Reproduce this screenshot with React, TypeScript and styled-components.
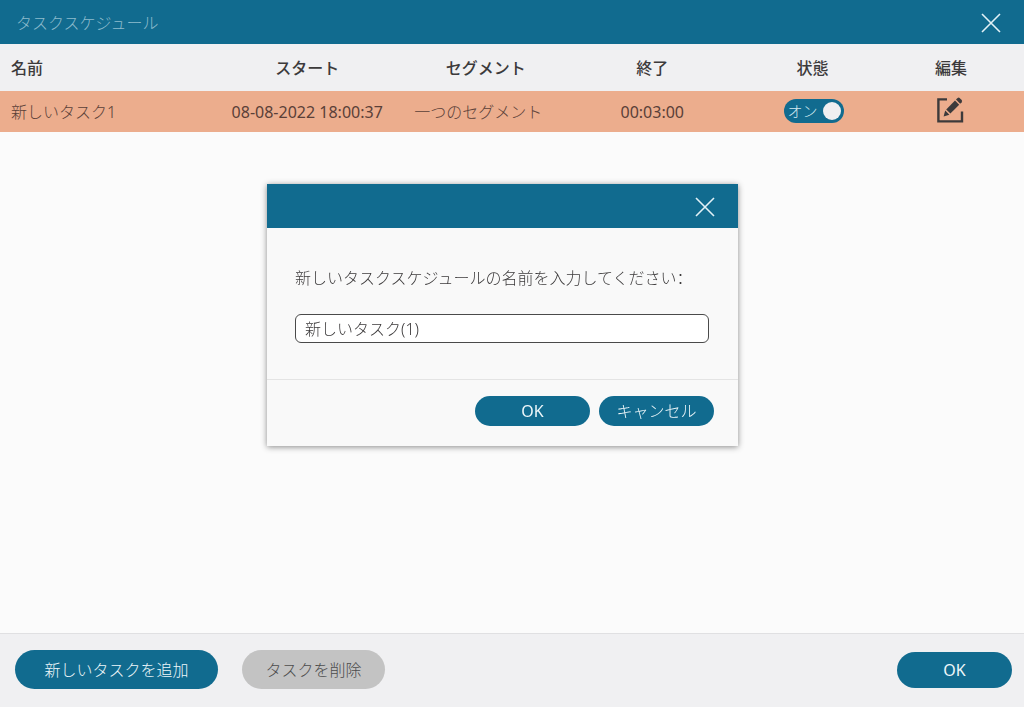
import { useState } from "react";
import styled, { createGlobalStyle } from "styled-components";

const color = {
  brand: "#116b8f",
  bar: "#f0f0f2",
  surface: "#fbfbfb",
  panel: "#f9f9f9",
  highlight: "#ecad8d",
  ink: "#3c3a3b",
  line: "#e0e0e2",
};

const GlobalStyle = createGlobalStyle`
  *, *::before, *::after { box-sizing: border-box; }
  body { margin: 0; }
  body, button, input {
    font-family: "Noto Sans", "Noto Sans CJK JP", sans-serif;
    font-size: 16px;
    line-height: 24px;
    color: ${color.ink};
  }
`;

const Window = styled.div`
  display: flex;
  flex-direction: column;
  min-height: 100vh;
  background: ${color.surface};
`;

const TitleBar = styled.header<{ $inset: number }>`
  display: flex;
  align-items: center;
  justify-content: space-between;
  height: 44px;
  padding: 2px ${(p) => p.$inset}px 0 16px;
  background: ${color.brand};
`;

const Title = styled.h1`
  margin: 0;
  font-size: 16px;
  font-weight: 300;
  color: #8dbccd;
`;

const CloseButton = styled.button`
  display: flex;
  margin-left: auto;
  padding: 0;
  border: 0;
  background: none;
  color: #e2f1f6;
  cursor: pointer;
`;

const Content = styled.main`
  flex: 1;
`;

const Table = styled.table`
  width: 100%;
  border-collapse: collapse;
  table-layout: fixed;
`;

const HeadRow = styled.tr`
  height: 47px;
  background: ${color.bar};
`;

const TaskRow = styled.tr`
  height: 41px;
  background: ${color.highlight};
  color: #5a4038;
`;

const HeadCell = styled.th<{ $width: string; $align?: string; $end?: number }>`
  width: ${(p) => p.$width};
  padding: 0 ${(p) => p.$end ?? 0}px 0 ${(p) => (p.$align === "left" ? 11 : 0)}px;
  text-align: ${(p) => p.$align ?? "center"};
  font-weight: 500;
`;

const Cell = styled.td<{ $align?: string; $start?: number; $end?: number; $light?: boolean }>`
  padding: 0 ${(p) => p.$end ?? 0}px 0 ${(p) => p.$start ?? 0}px;
  text-align: ${(p) => p.$align ?? "center"};
  font-weight: ${(p) => (p.$light ? 300 : 400)};
`;

const ControlCell = styled(Cell)`
  padding-bottom: 3px;
`;

const Toggle = styled.label`
  display: inline-flex;
  align-items: center;
  justify-content: space-between;
  width: 60px;
  height: 24px;
  padding: 0 3px 0 4px;
  border-radius: 12px;
  background: ${color.brand};
  color: #d5eaf1;
  font-size: 15px;
  font-weight: 300;
  line-height: 24px;
  vertical-align: middle;
  cursor: pointer;
`;

const ToggleKnob = styled.input`
  appearance: none;
  width: 18px;
  height: 18px;
  margin: 0;
  border-radius: 50%;
  background: #efeff1;
`;

const IconButton = styled.button`
  display: inline-flex;
  padding: 0;
  border: 0;
  background: none;
  color: ${color.ink};
  vertical-align: middle;
  cursor: pointer;
`;

const ActionBar = styled.footer`
  display: flex;
  align-items: center;
  gap: 24px;
  height: 74px;
  padding: 0 12px 2px 15px;
  border-top: 1px solid ${color.line};
  background: ${color.bar};
`;

const sizes = {
  small: { width: 115, height: 30 },
  medium: { width: 115, height: 36 },
  large: { width: 143, height: 39 },
  wide: { width: 203, height: 39 },
};

const PillButton = styled.button<{ $size: keyof typeof sizes; $push?: boolean; $light?: boolean }>`
  width: ${(p) => sizes[p.$size].width}px;
  height: ${(p) => sizes[p.$size].height}px;
  margin-left: ${(p) => (p.$push ? "auto" : 0)};
  padding: 0;
  border: 0;
  border-radius: 20px;
  background: ${color.brand};
  color: #eef7fa;
  font-weight: ${(p) => (p.$light ? 300 : 400)};
  cursor: pointer;

  &:disabled {
    background: #c3c3c3;
    color: #4c4c4c;
    cursor: default;
  }
`;

const Overlay = styled.div`
  position: fixed;
  inset: 0;
  display: flex;
  align-items: flex-start;
  justify-content: center;
  padding: 26vh 19px 0 0;
`;

const Dialog = styled.form`
  width: 471px;
  max-width: 100%;
  background: ${color.panel};
  box-shadow: 0 1px 6px rgba(0, 0, 0, 0.45);
`;

const DialogBody = styled.div`
  display: flex;
  flex-direction: column;
  gap: 24px;
  padding: 38px 29px 36px 28px;
`;

const Prompt = styled.label`
  font-family: "Noto Sans", "Noto Sans CJK SC", sans-serif;
  font-weight: 300;
`;

const TextInput = styled.input`
  width: 100%;
  height: 29px;
  padding: 0 9px;
  border: 1px solid #4a4a4a;
  border-radius: 6px;
  outline: 0;
  background: #fff;
  font-weight: 300;
`;

const DialogActions = styled.div`
  display: flex;
  justify-content: flex-end;
  gap: 9px;
  padding: 16px 24px 20px;
  border-top: 1px solid #e4e4e4;
`;

function CloseIcon() {
  return (
    <svg width="20" height="20" viewBox="0 0 20 20" fill="none" stroke="currentColor" strokeWidth="1.6" aria-hidden="true">
      <path d="M1 1 19 19M19 1 1 19" />
    </svg>
  );
}

function EditIcon() {
  return (
    <svg width="28" height="28" viewBox="0 0 28 28" aria-hidden="true">
      <path d="M11 3.4H2.4V25.4H26V15.5" fill="none" stroke="currentColor" strokeWidth="2.4" />
      <path d="M7.6 20.4 9.2 14.6 13.4 18.8Z" fill="currentColor" />
      <path d="M10.2 13.4 19 4.6 23.2 8.8 14.4 17.6Z" fill="currentColor" />
      <path d="M20 3.6 21.6 2Q22.6 1.2 23.6 2L25.7 4.1Q26.5 5.2 25.7 6.3L24.2 7.8Z" fill="currentColor" />
    </svg>
  );
}

export default function App() {
  const [enabled, setEnabled] = useState(true);
  const [dialogOpen, setDialogOpen] = useState(true);
  const [name, setName] = useState("新しいタスク(1)");
  const closeDialog = () => setDialogOpen(false);

  return (
    <Window lang="ja">
      <GlobalStyle />
      <TitleBar $inset={23}>
        <Title>タスクスケジュール</Title>
        <CloseButton type="button" aria-label="閉じる">
          <CloseIcon />
        </CloseButton>
      </TitleBar>

      <Content>
        <Table>
          <thead>
            <HeadRow>
              <HeadCell $width="21.3%" $align="left">名前</HeadCell>
              <HeadCell $width="17.4%">スタート</HeadCell>
              <HeadCell $width="17.5%">セグメント</HeadCell>
              <HeadCell $width="15%">終了</HeadCell>
              <HeadCell $width="16.3%">状態</HeadCell>
              <HeadCell $width="12.5%" $end={18}>編集</HeadCell>
            </HeadRow>
          </thead>
          <tbody>
            <TaskRow>
              <Cell $align="left" $start={11} $light>新しいタスク1</Cell>
              <Cell>08-08-2022 18:00:37</Cell>
              <Cell $align="left" $start={18} $light>一つのセグメント</Cell>
              <Cell>00:03:00</Cell>
              <ControlCell $start={2}>
                <Toggle>
                  {enabled ? "オン" : "オフ"}
                  <ToggleKnob
                    type="checkbox"
                    role="switch"
                    checked={enabled}
                    onChange={(e) => setEnabled(e.target.checked)}
                  />
                </Toggle>
              </ControlCell>
              <ControlCell $end={20}>
                <IconButton type="button" aria-label="編集">
                  <EditIcon />
                </IconButton>
              </ControlCell>
            </TaskRow>
          </tbody>
        </Table>
      </Content>

      <ActionBar>
        <PillButton type="button" $size="wide" $light onClick={() => setDialogOpen(true)}>
          新しいタスクを追加
        </PillButton>
        <PillButton type="button" $size="large" $light disabled>
          タスクを削除
        </PillButton>
        <PillButton type="button" $size="medium" $push>
          OK
        </PillButton>
      </ActionBar>

      {dialogOpen && (
        <Overlay>
          <Dialog
            role="dialog"
            aria-modal="true"
            aria-labelledby="task-name-label"
            onSubmit={(e) => {
              e.preventDefault();
              closeDialog();
            }}
          >
            <TitleBar as="div" $inset={23}>
              <CloseButton type="button" aria-label="閉じる" onClick={closeDialog}>
                <CloseIcon />
              </CloseButton>
            </TitleBar>
            <DialogBody>
              <Prompt id="task-name-label" htmlFor="task-name" lang="zh-Hans">
                新しいタスクスケジュールの名前を入力してください：
              </Prompt>
              <TextInput
                id="task-name"
                autoFocus
                value={name}
                onFocus={(e) => e.target.setSelectionRange(name.length, name.length)}
                onChange={(e) => setName(e.target.value)}
              />
            </DialogBody>
            <DialogActions>
              <PillButton type="submit" $size="small">
                OK
              </PillButton>
              <PillButton type="button" $size="small" $light onClick={closeDialog}>
                キャンセル
              </PillButton>
            </DialogActions>
          </Dialog>
        </Overlay>
      )}
    </Window>
  );
}
